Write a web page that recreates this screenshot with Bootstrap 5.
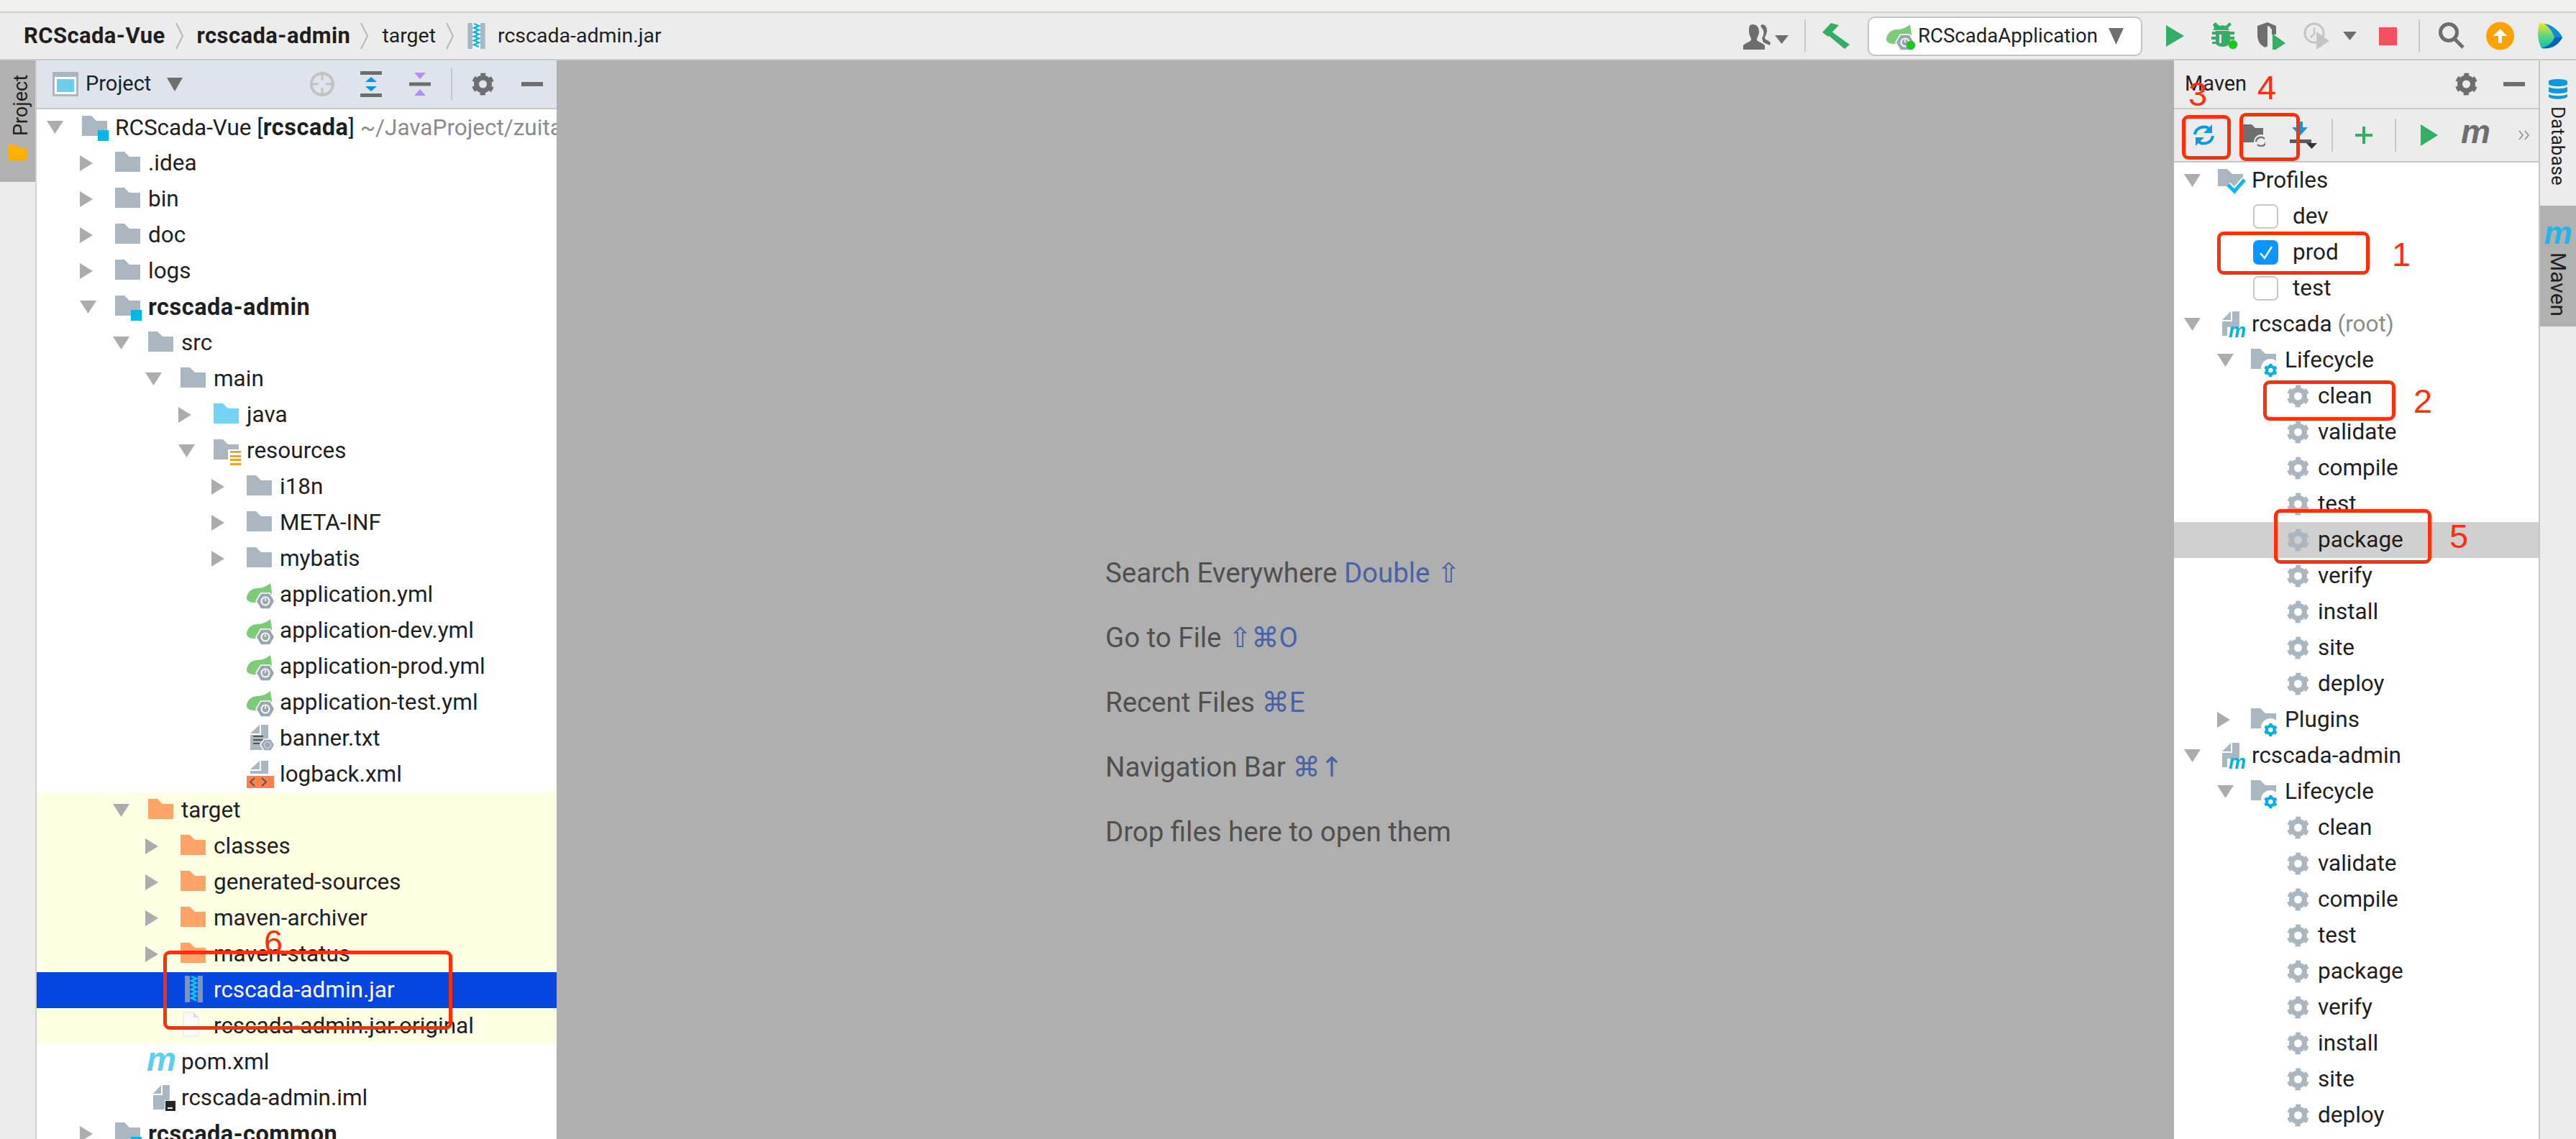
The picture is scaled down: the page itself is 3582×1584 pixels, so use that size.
<!DOCTYPE html>
<html lang="en">
<head>
<meta charset="utf-8">
<title>RCScada-Vue</title>
<link href="https://cdn.jsdelivr.net/npm/bootstrap@5.3.0/dist/css/bootstrap.min.css" rel="stylesheet">
<style>
html,body{margin:0;height:1584px;overflow:hidden;background:#ececec}
body{font-family:Roboto,"DejaVu Sans",sans-serif;color:#1f1f1f}
.ide-root{position:relative;width:3582px;height:1584px;overflow:hidden}
.strip{height:18px;background:#f0f0ef;border-bottom:2px solid #d0d0d0}
.crumbs{height:66px;background:#ececec;border-bottom:2px solid #c9c9c9;font-size:28.5px;padding-left:33px;padding-right:17px}
.crumbs b{font-weight:700;font-size:31px;letter-spacing:.4px}
.ch1{margin:0 18px 0 14px}.ch2{margin-right:9px}
.sepv{width:2px;height:46px;background:#c8c8c8}
.cfgbox{width:382px;height:55px;background:#fff;border:2px solid #c4c4c4;border-radius:10px;padding-left:24px;font-size:27.6px}
.g19{margin-left:19px}.g20{margin-left:20px}.g22{margin-left:22px}.g25{margin-left:25px}.g26{margin-left:26px}.g27{margin-left:27px}.g28{margin-left:28px}.g29{margin-left:29px}.g30{margin-left:30px}.g31{margin-left:31px}.g32{margin-left:32px}.g33{margin-left:33px}.g34{margin-left:34px}.g36{margin-left:36px}.g37{margin-left:37px}.g38{margin-left:38px}
.ide-main{height:1500px}
.lstripe{width:51px;background:#ececec;border-right:2px solid #cfcfcf}
.rstripe{width:50px;background:#ececec}
.vtab{background:#b1b1b1}
.ptab{height:169px;padding-top:20px}
.ptab .vtxt{margin-left:9px}
.vtxt{font-size:27px;line-height:1;color:#1f1f1f;writing-mode:vertical-rl}
.vup{transform:rotate(180deg)}
.dbtab{height:202px;padding-top:26px}
.dbtab .vtxt{font-size:26px}
.mvtab{height:168px;padding-top:16px}
.mvtab .vtxt{font-size:30px}
.vm{font:italic 700 44px/1 "Liberation Sans",sans-serif;color:#22b5e8;height:44px;margin-bottom:5px}
.dbtab svg{margin-bottom:10px}
.ppanel{width:723px}
.phead{height:68px;background:#dfe4ec;border-bottom:2px solid #c8c8c8;padding-left:22px}
.hname{font-size:29px;margin-left:10px;width:113px}
.ptree,.mtree{background:#fff;height:1432px;overflow:hidden}
.tr{height:50px;line-height:50px;font-size:31.5px;white-space:nowrap;overflow:hidden}
.tr b{font-weight:700;font-size:32.5px;letter-spacing:.5px}
.dim{color:#8b8b8b}
.d0{padding-left:14px}.d1{padding-left:60px}.d2{padding-left:106px}.d3{padding-left:151px}.d4{padding-left:197px}.d5{padding-left:243px}
.aslot{width:49px;flex:none}
.islot{width:46px;flex:none;height:40px}
.ic{display:block;overflow:visible}
.tri{fill:#acacac}
.f-g{color:#aab7c0}.f-b{color:#72d4f2}.f-o{color:#ffa366}
.tint{background:#ffffe4}
.sel{background:#0546e0;color:#fff}
.ide-ed{background:#afafaf;padding-left:763px;padding-top:691px;font-size:38.4px;line-height:44px;color:#505050;gap:46px}
.kb{color:#4a62a8}
.mpanel{width:509px;border-right:2px solid #c6c6c6;background:#ececec}
.mhead{height:68px;border-bottom:2px solid #c8c8c8;padding-left:15px}
.mname{font-size:29px;width:376px}
.mtool{height:74px;border-bottom:2px solid #c8c8c8;padding-left:25px}
.mtree{height:1358px}
.mtree .aslot{width:47px}
.mtree .islot{width:47px}
.hilite{background:#d0d0d0}
.pfr{padding-left:110px}
.tsk{padding-left:157px}
.cbx{width:35px;height:34px;border:2px solid #c8c8c8;border-radius:7px;background:#fff;margin-right:20px;flex:none}
.cbx.on{background:#0a95ff;border-color:#0a95ff}
.ann{position:absolute;border:5px solid #ff2f0a;border-radius:9px;z-index:5}
.num{position:absolute;color:#ff2f0a;font:400 47px/1 "Liberation Sans",sans-serif;z-index:5}
.a1{left:3083px;top:322px;width:212px;height:60px}
.a2{left:3147px;top:529px;width:184px;height:56px}
.a3{left:3034px;top:160px;width:68px;height:62px}
.a4{left:3114px;top:157px;width:84px;height:67px}
.a5{left:3162px;top:708px;width:219px;height:76px}
.a6{left:227px;top:1322px;width:402px;height:110px}
.n1{left:3326px;top:330px}.n2{left:3356px;top:534px}.n3{left:3043px;top:107px}.n4{left:3139px;top:98px}.n5{left:3406px;top:722px}.n6{left:367px;top:1286px}
</style>
</head>
<body>
<svg width="0" height="0" class="position-absolute">
  <defs>
    <symbol id="fld" viewBox="0 0 40 40" overflow="visible"><path fill="currentColor" d="M0 4h13l7 7h15v21H0z"/></symbol>
    <symbol id="mod" viewBox="0 0 40 40" overflow="visible"><path fill="#aab7c0" d="M0 4h13l7 7h15v21H0z"/><rect x="22" y="24" width="15" height="15" fill="#00b8e6"/></symbol>
    <symbol id="res" viewBox="0 0 40 40" overflow="visible"><path fill="#aab7c0" d="M0 4h13l7 7h15v21H0z"/><rect x="20" y="18" width="18" height="22" fill="#fff"/><path fill="#e9a52d" d="M23 20h15v3H23zM23 26h15v3H23zM23 31h15v3H23zM23 37h15v3H23z"/></symbol>
    <symbol id="gear" viewBox="0 0 40 40" overflow="visible"><circle cx="15.5" cy="20" r="9" fill="none" stroke="currentColor" stroke-width="7"/><circle cx="15.5" cy="20" r="13" fill="none" stroke="currentColor" stroke-width="5" stroke-dasharray="7 6.6" stroke-dashoffset="3.5" transform="rotate(-90 15.5 20)"/></symbol>
    <symbol id="fgear" viewBox="0 0 40 40" overflow="visible"><path fill="#aab7c0" d="M0 4h13l7 7h15v21H0z"/><circle cx="27" cy="31" r="13" fill="#fff"/><g transform="translate(18 22) scale(.6)" color="#00b0e0"><use href="#gear" width="40" height="40"/></g></symbol>
    <symbol id="leaf" viewBox="0 0 40 40" overflow="visible"><path fill="#7ccb76" d="M33 4c1 5 2 11 2 16L22 32l-8 2 6-3-10 0c-6 0-11-3-10-8C2 15 8 11 15 11c7 0 13-3 18-7z"/><path d="M13 29l6.500-11h13L39 29l-6.500 11h-13z" fill="#9aa7b0" stroke="#fff" stroke-width="1.500"/><circle cx="26" cy="29" r="5.500" fill="none" stroke="#fff" stroke-width="2"/><path d="M26 24v5" stroke="#9aa7b0" stroke-width="4"/><path d="M26 24v5" stroke="#fff" stroke-width="1.500"/></symbol>
    <symbol id="mfile" viewBox="0 0 40 40" overflow="visible"><path fill="#aab7c0" d="M14 2h10v34H0V16h14zM12 2v12H0z"/><path d="M7 24h27v16H7z" fill="#fff"/><text x="9" y="38" font-family="Liberation Sans" font-weight="700" font-style="italic" font-size="27" fill="#00b0e0">m</text></symbol>
    <symbol id="jar" viewBox="0 0 25 37" overflow="visible"><rect width="25" height="37" fill="#a9b8c2"/><rect x="7" width="11" height="37" fill="#fff"/><path d="M9 1l7 3-7 3 7 3-7 3 7 3-7 3 7 3-7 3 7 3-7 3 7 3" fill="none" stroke="#10b5e6" stroke-width="2.500"/></symbol>
    <symbol id="jars" viewBox="0 0 25 37" overflow="visible"><rect width="25" height="37" fill="#7d94b4"/><rect x="7" width="11" height="37" fill="#0d52d8"/><path d="M9 1l7 3-7 3 7 3-7 3 7 3-7 3 7 3-7 3 7 3-7 3 7 3" fill="none" stroke="#18c0ea" stroke-width="2.500"/></symbol>
  </defs>
</svg>

<div class="ide-root d-flex flex-column">
  <div class="strip"></div>
  <div class="crumbs d-flex align-items-center">
    <b>RCScada-Vue</b>
    <svg class="ch1" width="12" height="38"><path d="M1 1l9 18-9 18" fill="none" stroke="#b8b8b8" stroke-width="2"/></svg>
    <b>rcscada-admin</b>
    <svg class="ch1" width="12" height="38"><path d="M1 1l9 18-9 18" fill="none" stroke="#b8b8b8" stroke-width="2"/></svg>
    <span>target</span>
    <svg class="ch1" width="12" height="38"><path d="M1 1l9 18-9 18" fill="none" stroke="#b8b8b8" stroke-width="2"/></svg>
    <svg class="ic ch2" width="25" height="36"><use href="#jar" width="25" height="36"/></svg>
    <span class="ms-2">rcscada-admin.jar</span>

    <svg class="ms-auto" width="63" height="40" viewBox="0 0 63 40"><path fill="#6e6e6e" d="M13 4c6 0 9 4 9 10 0 5-3 8-3 11 0 3 7 4 11 8v6H0v-6c4-4 11-5 11-8 0-3-3-6-3-11 0-6 0-10 5-10z"/><path fill="#6e6e6e" d="M26 4c5 0 7 4 7 9 0 5-3 7-3 10 0 2 5 3 8 6l-1 4-9-4-2-6c2-3 3-7 2-11l-4-6z"/><path fill="#6e6e6e" d="M44 19h19l-9.500 12z"/></svg>
    <div class="sepv g22"></div>
    <svg class="g22" width="39" height="36" viewBox="0 0 39 36"><path fill="#34ad67" d="M1 13L13 0l11 3L9 19z"/><path fill="#34ad67" d="M14 12l25 18-7 6L9 17z"/></svg>
    <div class="cfgbox g25 d-flex align-items-center">
      <svg class="ic flex-none" width="44" height="40"><use href="#leaf" width="40" height="40"/><circle cx="34" cy="33" r="6" fill="#06d406" stroke="#8a8a8a"/></svg>
      <span>RCScadaApplication</span>
      <svg class="ms-auto me-4" width="21" height="26" viewBox="0 0 21 26"><path fill="#6e6e6e" d="M0 2h21L10.500 25z"/></svg>
    </div>
    <svg class="g33" width="25" height="30" viewBox="0 0 25 30"><path fill="#34ad67" d="M0 0l25 15L0 30z"/></svg>
    <svg class="g37" width="38" height="38" viewBox="0 0 38 38"><path fill="#34ad67" d="M7 0l5 5c3-1 6-1 9 0l5-5 3 3-5 5 2 3H3l2-3-2-5zM2 13h5v-1h19v1h7v4h-6v3h6v4h-6v3h5v3h-6c-3 3-5 4-9 4s-7-1-10-4H2v-3h5v-3H1v-4h6v-3H2zM12 17v12h3V17z"/><circle cx="31" cy="31" r="6" fill="#06d406" stroke="#8a8a8a"/></svg>
    <svg class="g27" width="39" height="38" viewBox="0 0 39 38"><path fill="#6e6e6e" d="M0 5l14-5 12 5v12h-6V7l-6-2v28l-3 2C4 32 0 26 0 18z"/><path fill="#6e6e6e" d="M18 5l8 0v4h-8z"/><path fill="#34ad67" d="M21 16l18 13-18 12z"/></svg>
    <svg class="g25" width="36" height="38" viewBox="0 0 36 38"><circle cx="15" cy="15" r="13" fill="none" stroke="#c4c4c4" stroke-width="3"/><path d="M15 7v9l-5 5" fill="none" stroke="#c4c4c4" stroke-width="2.500"/><path fill="#c4c4c4" d="M18 13l18 13-18 12z"/></svg>
    <svg class="g19" width="19" height="12" viewBox="0 0 19 12"><path fill="#6e6e6e" d="M0 0h19L9.500 12z"/></svg>
    <svg class="g31" width="25" height="25"><rect width="25" height="25" fill="#f1505f"/></svg>
    <div class="sepv g30"></div>
    <svg class="g26" width="36" height="38" viewBox="0 0 36 38"><circle cx="14" cy="14" r="11.500" fill="none" stroke="#6e6e6e" stroke-width="5"/><path d="M22 23l12 12" stroke="#6e6e6e" stroke-width="5"/></svg>
    <svg class="g30" width="39" height="40" viewBox="0 0 40 40"><circle cx="20" cy="20" r="20" fill="#ffa200"/><path fill="#fff" d="M20 10l10 10h-7.500v10h-5V20H10z"/></svg>
    <svg class="g32" width="37" height="36" viewBox="0 0 37 36"><defs><linearGradient id="lg1" x1="0" y1="0" x2="0" y2="1"><stop offset="0" stop-color="#f2e820"/><stop offset=".5" stop-color="#5fd47c"/><stop offset="1" stop-color="#08c3b4"/></linearGradient></defs><path fill="url(#lg1)" d="M3 0c14 1 26 9 32 20C30 30 20 37 6 35 0 24 0 10 3 0z"/><path fill="#0a8ed8" d="M10 1c10 1 20 9 25 19H24C22 13 17 6 10 1z"/><path fill="#0a62b8" d="M35 20C30 30 20 37 6 35c9-3 16-8 18-15z"/></svg>
  </div>

  <div class="ide-main d-flex">
    <div class="lstripe flex-none">
      <div class="vtab ptab d-flex flex-column align-items-center gap-2">
        <span class="vtxt vup">Project</span>
        <svg class="mt-1" width="26" height="22" viewBox="0 0 26 22"><path fill="#ffb000" d="M0 0h11l4 5h11v17H0z"/></svg>
      </div>
    </div>

    <div class="ppanel flex-none">
      <div class="phead d-flex align-items-center">
        <svg width="36" height="34" viewBox="0 0 36 34"><rect width="36" height="34" fill="#aab7c0"/><rect x="3" y="7" width="30" height="24" fill="#fff"/><rect x="6" y="10" width="24" height="18" fill="#6dcdeb"/></svg>
        <span class="hname">Project</span>
        <svg width="22" height="19" viewBox="0 0 22 19"><path fill="#6e6e6e" d="M0 0h22L11 19z"/></svg>
        <svg class="ms-auto" width="34" height="34" viewBox="0 0 34 34"><circle cx="17" cy="17" r="15" fill="none" stroke="#c2c2c2" stroke-width="4"/><path d="M17 2v10M17 22v10M2 17h10M22 17h10" stroke="#c2c2c2" stroke-width="3"/></svg>
        <svg class="g36" width="30" height="36" viewBox="0 0 30 36"><rect width="30" height="5" fill="#6e6e6e"/><rect y="31" width="30" height="5" fill="#6e6e6e"/><path fill="#0a95d8" d="M15 8l8 7H7zM15 28l8-7H7z"/></svg>
        <svg class="g38" width="30" height="32" viewBox="0 0 30 32"><rect y="13.500" width="30" height="5" fill="#6e6e6e"/><path fill="#b68cf5" d="M7 0h16l-8 9zM7 32h16l-8-9z"/></svg>
        <div class="sepv g28"></div>
        <svg class="g27 ic" width="40" height="40"><use href="#gear" width="40" height="40" color="#6e6e6e"/></svg>
        <svg class="g29" width="30" height="6"><rect width="30" height="6" fill="#6e6e6e"/></svg>
        <span class="g19"></span>
      </div>
      <div class="ptree">
        <div class="tr d0 d-flex align-items-center"><div class="aslot"><svg class="ic" width="23" height="18"><path class="tri" d="M0 0h23L11.500 18z"/></svg></div><div class="islot"><svg class="ic" width="40" height="40"><use href="#mod" width="40" height="40"/></svg></div><span>RCScada-Vue [<b>rcscada</b>] <span class="dim">~/JavaProject/zuitao/RCScada</span></span></div>
        <div class="tr d1 d-flex align-items-center"><div class="aslot"><svg class="ic" width="18" height="22"><path class="tri" d="M0 0l18 11L0 22z"/></svg></div><div class="islot"><svg class="ic f-g" width="40" height="40"><use href="#fld" width="40" height="40"/></svg></div><span>.idea</span></div>
        <div class="tr d1 d-flex align-items-center"><div class="aslot"><svg class="ic" width="18" height="22"><path class="tri" d="M0 0l18 11L0 22z"/></svg></div><div class="islot"><svg class="ic f-g" width="40" height="40"><use href="#fld" width="40" height="40"/></svg></div><span>bin</span></div>
        <div class="tr d1 d-flex align-items-center"><div class="aslot"><svg class="ic" width="18" height="22"><path class="tri" d="M0 0l18 11L0 22z"/></svg></div><div class="islot"><svg class="ic f-g" width="40" height="40"><use href="#fld" width="40" height="40"/></svg></div><span>doc</span></div>
        <div class="tr d1 d-flex align-items-center"><div class="aslot"><svg class="ic" width="18" height="22"><path class="tri" d="M0 0l18 11L0 22z"/></svg></div><div class="islot"><svg class="ic f-g" width="40" height="40"><use href="#fld" width="40" height="40"/></svg></div><span>logs</span></div>
        <div class="tr d1 d-flex align-items-center"><div class="aslot"><svg class="ic" width="23" height="18"><path class="tri" d="M0 0h23L11.500 18z"/></svg></div><div class="islot"><svg class="ic" width="40" height="40"><use href="#mod" width="40" height="40"/></svg></div><b>rcscada-admin</b></div>
        <div class="tr d2 d-flex align-items-center"><div class="aslot"><svg class="ic" width="23" height="18"><path class="tri" d="M0 0h23L11.500 18z"/></svg></div><div class="islot"><svg class="ic f-g" width="40" height="40"><use href="#fld" width="40" height="40"/></svg></div><span>src</span></div>
        <div class="tr d3 d-flex align-items-center"><div class="aslot"><svg class="ic" width="23" height="18"><path class="tri" d="M0 0h23L11.500 18z"/></svg></div><div class="islot"><svg class="ic f-g" width="40" height="40"><use href="#fld" width="40" height="40"/></svg></div><span>main</span></div>
        <div class="tr d4 d-flex align-items-center"><div class="aslot"><svg class="ic" width="18" height="22"><path class="tri" d="M0 0l18 11L0 22z"/></svg></div><div class="islot"><svg class="ic f-b" width="40" height="40"><use href="#fld" width="40" height="40"/></svg></div><span>java</span></div>
        <div class="tr d4 d-flex align-items-center"><div class="aslot"><svg class="ic" width="23" height="18"><path class="tri" d="M0 0h23L11.500 18z"/></svg></div><div class="islot"><svg class="ic" width="40" height="40"><use href="#res" width="40" height="40"/></svg></div><span>resources</span></div>
        <div class="tr d5 d-flex align-items-center"><div class="aslot"><svg class="ic" width="18" height="22"><path class="tri" d="M0 0l18 11L0 22z"/></svg></div><div class="islot"><svg class="ic f-g" width="40" height="40"><use href="#fld" width="40" height="40"/></svg></div><span>i18n</span></div>
        <div class="tr d5 d-flex align-items-center"><div class="aslot"><svg class="ic" width="18" height="22"><path class="tri" d="M0 0l18 11L0 22z"/></svg></div><div class="islot"><svg class="ic f-g" width="40" height="40"><use href="#fld" width="40" height="40"/></svg></div><span>META-INF</span></div>
        <div class="tr d5 d-flex align-items-center"><div class="aslot"><svg class="ic" width="18" height="22"><path class="tri" d="M0 0l18 11L0 22z"/></svg></div><div class="islot"><svg class="ic f-g" width="40" height="40"><use href="#fld" width="40" height="40"/></svg></div><span>mybatis</span></div>
        <div class="tr d5 d-flex align-items-center"><div class="aslot"></div><div class="islot"><svg class="ic" width="40" height="40"><use href="#leaf" width="40" height="40"/></svg></div><span>application.yml</span></div>
        <div class="tr d5 d-flex align-items-center"><div class="aslot"></div><div class="islot"><svg class="ic" width="40" height="40"><use href="#leaf" width="40" height="40"/></svg></div><span>application-dev.yml</span></div>
        <div class="tr d5 d-flex align-items-center"><div class="aslot"></div><div class="islot"><svg class="ic" width="40" height="40"><use href="#leaf" width="40" height="40"/></svg></div><span>application-prod.yml</span></div>
        <div class="tr d5 d-flex align-items-center"><div class="aslot"></div><div class="islot"><svg class="ic" width="40" height="40"><use href="#leaf" width="40" height="40"/></svg></div><span>application-test.yml</span></div>
        <div class="tr d5 d-flex align-items-center"><div class="aslot"></div><div class="islot"><svg class="ic" width="40" height="40" viewBox="0 0 40 40"><path fill="#aab7c0" d="M20 1h10v35H5V15h15zM18 1v12H5z"/><path d="M9 16h14v2H9zM9 21h14v2H9zM9 26h9v2H9z" fill="#555"/><path d="M19 29l5-8h10l5 8-5 8H24z" fill="#9aa7b0" stroke="#fff" stroke-width="1.500"/><circle cx="29" cy="29" r="4.500" fill="none" stroke="#c4ccd2" stroke-width="2"/></svg></div><span>banner.txt</span></div>
        <div class="tr d5 d-flex align-items-center"><div class="aslot"></div><div class="islot"><svg class="ic" width="40" height="40" viewBox="0 0 40 40"><path fill="#aab7c0" d="M20 1h10v18H5v-4h15zM18 1v12H5z"/><rect y="22" width="38" height="17" fill="#ff7f4e"/><path d="M11 25l-6 5.500 6 5.500M21 25l6 5.500-6 5.500" fill="none" stroke="#555" stroke-width="2"/></svg></div><span>logback.xml</span></div>
        <div class="tr d2 tint d-flex align-items-center"><div class="aslot"><svg class="ic" width="23" height="18"><path class="tri" d="M0 0h23L11.500 18z"/></svg></div><div class="islot"><svg class="ic f-o" width="40" height="40"><use href="#fld" width="40" height="40"/></svg></div><span>target</span></div>
        <div class="tr d3 tint d-flex align-items-center"><div class="aslot"><svg class="ic" width="18" height="22"><path class="tri" d="M0 0l18 11L0 22z"/></svg></div><div class="islot"><svg class="ic f-o" width="40" height="40"><use href="#fld" width="40" height="40"/></svg></div><span>classes</span></div>
        <div class="tr d3 tint d-flex align-items-center"><div class="aslot"><svg class="ic" width="18" height="22"><path class="tri" d="M0 0l18 11L0 22z"/></svg></div><div class="islot"><svg class="ic f-o" width="40" height="40"><use href="#fld" width="40" height="40"/></svg></div><span>generated-sources</span></div>
        <div class="tr d3 tint d-flex align-items-center"><div class="aslot"><svg class="ic" width="18" height="22"><path class="tri" d="M0 0l18 11L0 22z"/></svg></div><div class="islot"><svg class="ic f-o" width="40" height="40"><use href="#fld" width="40" height="40"/></svg></div><span>maven-archiver</span></div>
        <div class="tr d3 tint d-flex align-items-center"><div class="aslot"><svg class="ic" width="18" height="22"><path class="tri" d="M0 0l18 11L0 22z"/></svg></div><div class="islot"><svg class="ic f-o" width="40" height="40"><use href="#fld" width="40" height="40"/></svg></div><span>maven-status</span></div>
        <div class="tr d3 sel d-flex align-items-center"><div class="aslot"></div><div class="islot"><svg class="ic" width="40" height="40"><use href="#jars" x="6" width="25" height="37"/></svg></div><span>rcscada-admin.jar</span></div>
        <div class="tr d3 tint d-flex align-items-center"><div class="aslot"></div><div class="islot"><svg class="ic" width="40" height="40" viewBox="0 0 40 40"><path d="M4 1h14l7 7v26H4z" fill="#fafafa" stroke="#e3e3e3"/><path d="M18 1v7h7z" fill="#dcdcdc"/></svg></div><span>rcscada-admin.jar.original</span></div>
        <div class="tr d2 d-flex align-items-center"><div class="aslot"></div><div class="islot"><svg class="ic" width="40" height="40" viewBox="0 0 40 40"><text x="-2" y="32" font-family="Liberation Sans" font-weight="700" font-style="italic" font-size="46" fill="#5fcdf0">m</text></svg></div><span>pom.xml</span></div>
        <div class="tr d2 d-flex align-items-center"><div class="aslot"></div><div class="islot"><svg class="ic" width="40" height="40" viewBox="0 0 40 40"><path fill="#aab7c0" d="M20 2h10v34H7V16h13zM18 2v12H7z"/><rect x="23" y="23" width="15" height="15" fill="#fff"/><rect x="24" y="24" width="14" height="14" fill="#262626"/><rect x="27" y="33" width="7" height="2" fill="#fff"/></svg></div><span>rcscada-admin.iml</span></div>
        <div class="tr d1 d-flex align-items-center"><div class="aslot"><svg class="ic" width="18" height="22"><path class="tri" d="M0 0l18 11L0 22z"/></svg></div><div class="islot"><svg class="ic" width="40" height="40"><use href="#mod" width="40" height="40"/></svg></div><b>rcscada-common</b></div>
      </div>
    </div>

    <div class="ide-ed flex-grow-1 d-flex flex-column">
      <div>Search Everywhere <span class="kb">Double ⇧</span></div>
      <div>Go to File <span class="kb">⇧⌘O</span></div>
      <div>Recent Files <span class="kb">⌘E</span></div>
      <div>Navigation Bar <span class="kb">⌘↑</span></div>
      <div>Drop files here to open them</div>
    </div>

    <div class="mpanel flex-none">
      <div class="mhead d-flex align-items-center">
        <span class="mname">Maven</span>
        <svg class="ic" width="40" height="40"><use href="#gear" width="40" height="40" color="#6e6e6e"/></svg>
        <svg class="g27" width="30" height="6"><rect width="30" height="6" fill="#6e6e6e"/></svg>
      </div>
      <div class="mtool d-flex align-items-center">
        <svg width="33" height="30" viewBox="0 0 33 30"><path d="M4 14C5 6 13 2 21 4l5 4M29 16c-1 8-9 12-17 10l-5-4" fill="none" stroke="#0a9ade" stroke-width="4"/><path fill="#0a9ade" d="M28 0v12H16zM5 30V18h12z"/></svg>
        <svg class="g38" width="31" height="32" viewBox="0 0 31 32"><path fill="#6e6e6e" d="M0 1h12l5 5h11v20H0z"/><circle cx="25" cy="25" r="10" fill="#ececec"/><path d="M18 25a7 7 0 0 1 12-4M32 25a7 7 0 0 1-12 4" fill="none" stroke="#777" stroke-width="2.500"/></svg>
        <svg class="g34" width="38" height="38" viewBox="0 0 38 38"><path fill="#0a9ade" d="M10 0h8v8h7L14 20 3 8h7z"/><rect y="25" width="30" height="5" fill="#5a5a5a"/><path fill="#333" d="M23 30h15l-7.500 8z"/></svg>
        <div class="sepv g20"></div>
        <svg class="g31" width="24" height="24" viewBox="0 0 24 24"><path fill="#34ad67" d="M10 0h4v10h10v4H14v10h-4V14H0v-4h10z"/></svg>
        <div class="sepv g31"></div>
        <svg class="g34" width="24" height="30" viewBox="0 0 24 30"><path fill="#34ad67" d="M0 0l24 15L0 30z"/></svg>
        <svg class="g33 overflow-visible" width="41" height="30" viewBox="0 0 41 30"><text x="-1" y="26" font-family="Liberation Sans" font-weight="700" font-style="italic" font-size="46" fill="#6e6e6e">m</text></svg>
        <svg class="g38" width="16" height="14" viewBox="0 0 16 14"><path d="M1 1l5 6-5 6M9 1l5 6-5 6" fill="none" stroke="#8c8c8c" stroke-width="1.500"/></svg>
      </div>
      <div class="mtree">
        <div class="tr d0 d-flex align-items-center"><div class="aslot"><svg class="ic" width="23" height="18"><path class="tri" d="M0 0h23L11.500 18z"/></svg></div><div class="islot"><svg class="ic" width="40" height="40" viewBox="0 0 40 40"><path fill="#aab7c0" d="M0 4h13l7 7h15v17H0z"/><path d="M14 26l9 9 14-16" fill="none" stroke="#fff" stroke-width="9"/><path d="M14 26l9 9 14-16" fill="none" stroke="#0ab8e8" stroke-width="5"/></svg></div><span>Profiles</span></div>
        <div class="tr pfr d-flex align-items-center"><div class="cbx"></div><span>dev</span></div>
        <div class="tr pfr d-flex align-items-center"><div class="cbx on d-flex align-items-center justify-content-center"><svg width="20" height="20" viewBox="0 0 20 20"><path d="M2 11l6 7L18 2" fill="none" stroke="#fff" stroke-width="2.500"/></svg></div><span>prod</span></div>
        <div class="tr pfr d-flex align-items-center"><div class="cbx"></div><span>test</span></div>
        <div class="tr d0 d-flex align-items-center"><div class="aslot"><svg class="ic" width="23" height="18"><path class="tri" d="M0 0h23L11.500 18z"/></svg></div><div class="islot"><svg class="ic" width="40" height="40"><use href="#mfile" x="6" width="40" height="40"/></svg></div><span>rcscada <span class="dim">(root)</span></span></div>
        <div class="tr d1 d-flex align-items-center"><div class="aslot"><svg class="ic" width="23" height="18"><path class="tri" d="M0 0h23L11.500 18z"/></svg></div><div class="islot"><svg class="ic" width="40" height="40"><use href="#fgear" width="40" height="40"/></svg></div><span>Lifecycle</span></div>
        <div class="tr tsk d-flex align-items-center"><svg class="ic f-g me-2" width="35" height="40"><use href="#gear" width="40" height="40"/></svg><span>clean</span></div>
        <div class="tr tsk d-flex align-items-center"><svg class="ic f-g me-2" width="35" height="40"><use href="#gear" width="40" height="40"/></svg><span>validate</span></div>
        <div class="tr tsk d-flex align-items-center"><svg class="ic f-g me-2" width="35" height="40"><use href="#gear" width="40" height="40"/></svg><span>compile</span></div>
        <div class="tr tsk d-flex align-items-center"><svg class="ic f-g me-2" width="35" height="40"><use href="#gear" width="40" height="40"/></svg><span>test</span></div>
        <div class="tr tsk hilite d-flex align-items-center"><svg class="ic f-g me-2" width="35" height="40"><use href="#gear" width="40" height="40"/></svg><span>package</span></div>
        <div class="tr tsk d-flex align-items-center"><svg class="ic f-g me-2" width="35" height="40"><use href="#gear" width="40" height="40"/></svg><span>verify</span></div>
        <div class="tr tsk d-flex align-items-center"><svg class="ic f-g me-2" width="35" height="40"><use href="#gear" width="40" height="40"/></svg><span>install</span></div>
        <div class="tr tsk d-flex align-items-center"><svg class="ic f-g me-2" width="35" height="40"><use href="#gear" width="40" height="40"/></svg><span>site</span></div>
        <div class="tr tsk d-flex align-items-center"><svg class="ic f-g me-2" width="35" height="40"><use href="#gear" width="40" height="40"/></svg><span>deploy</span></div>
        <div class="tr d1 d-flex align-items-center"><div class="aslot"><svg class="ic" width="18" height="22"><path class="tri" d="M0 0l18 11L0 22z"/></svg></div><div class="islot"><svg class="ic" width="40" height="40"><use href="#fgear" width="40" height="40"/></svg></div><span>Plugins</span></div>
        <div class="tr d0 d-flex align-items-center"><div class="aslot"><svg class="ic" width="23" height="18"><path class="tri" d="M0 0h23L11.500 18z"/></svg></div><div class="islot"><svg class="ic" width="40" height="40"><use href="#mfile" x="6" width="40" height="40"/></svg></div><span>rcscada-admin</span></div>
        <div class="tr d1 d-flex align-items-center"><div class="aslot"><svg class="ic" width="23" height="18"><path class="tri" d="M0 0h23L11.500 18z"/></svg></div><div class="islot"><svg class="ic" width="40" height="40"><use href="#fgear" width="40" height="40"/></svg></div><span>Lifecycle</span></div>
        <div class="tr tsk d-flex align-items-center"><svg class="ic f-g me-2" width="35" height="40"><use href="#gear" width="40" height="40"/></svg><span>clean</span></div>
        <div class="tr tsk d-flex align-items-center"><svg class="ic f-g me-2" width="35" height="40"><use href="#gear" width="40" height="40"/></svg><span>validate</span></div>
        <div class="tr tsk d-flex align-items-center"><svg class="ic f-g me-2" width="35" height="40"><use href="#gear" width="40" height="40"/></svg><span>compile</span></div>
        <div class="tr tsk d-flex align-items-center"><svg class="ic f-g me-2" width="35" height="40"><use href="#gear" width="40" height="40"/></svg><span>test</span></div>
        <div class="tr tsk d-flex align-items-center"><svg class="ic f-g me-2" width="35" height="40"><use href="#gear" width="40" height="40"/></svg><span>package</span></div>
        <div class="tr tsk d-flex align-items-center"><svg class="ic f-g me-2" width="35" height="40"><use href="#gear" width="40" height="40"/></svg><span>verify</span></div>
        <div class="tr tsk d-flex align-items-center"><svg class="ic f-g me-2" width="35" height="40"><use href="#gear" width="40" height="40"/></svg><span>install</span></div>
        <div class="tr tsk d-flex align-items-center"><svg class="ic f-g me-2" width="35" height="40"><use href="#gear" width="40" height="40"/></svg><span>site</span></div>
        <div class="tr tsk d-flex align-items-center"><svg class="ic f-g me-2" width="35" height="40"><use href="#gear" width="40" height="40"/></svg><span>deploy</span></div>
      </div>
    </div>

    <div class="rstripe flex-none">
      <div class="dbtab d-flex flex-column align-items-center">
        <svg width="26" height="28" viewBox="0 0 26 28"><path fill="#0a9ade" d="M0 3c0-4 26-4 26 0v4c0 4-26 4-26 0zM0 11c5 3 21 3 26 0v6c0 4-26 4-26 0zM0 21c5 3 21 3 26 0v3c0 5-26 5-26 0z"/></svg>
        <span class="vtxt">Database</span>
      </div>
      <div class="vtab mvtab d-flex flex-column align-items-center">
        <div class="vm">m</div>
        <span class="vtxt">Maven</span>
      </div>
    </div>
  </div>

  <div class="ann a1"></div><div class="ann a2"></div><div class="ann a3"></div><div class="ann a4"></div><div class="ann a5"></div><div class="ann a6"></div>
  <span class="num n1">1</span><span class="num n2">2</span><span class="num n3">3</span><span class="num n4">4</span><span class="num n5">5</span><span class="num n6">6</span>
</div>
<script src="https://cdn.jsdelivr.net/npm/bootstrap@5.3.0/dist/js/bootstrap.bundle.min.js"></script>
</body>
</html>
